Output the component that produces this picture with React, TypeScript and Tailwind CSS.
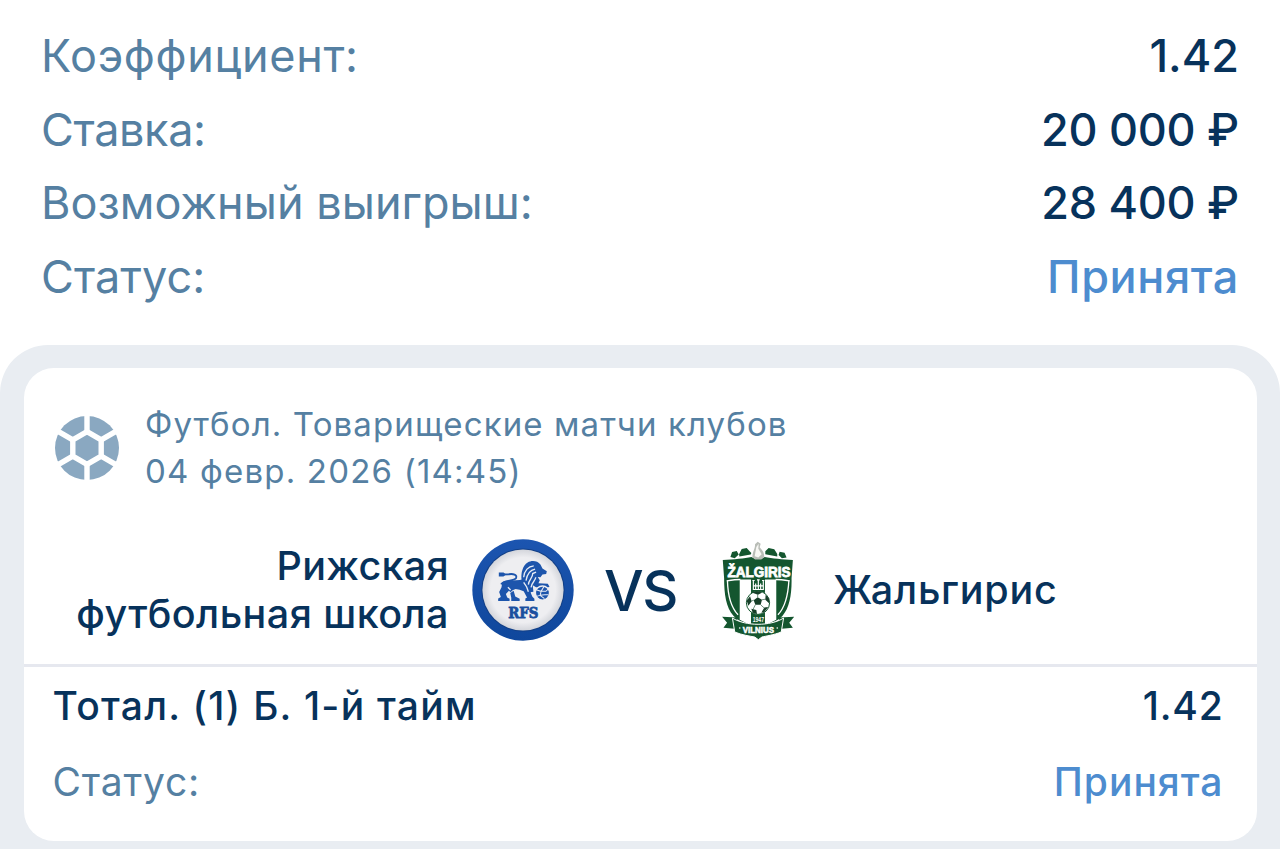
import type { ReactNode } from 'react'

const summary = [
  { label: 'Коэффициент:', value: '1.42', labelClass: 'tracking-[0.65px]', valueClass: 'text-[#07325b]' },
  { label: 'Ставка:', value: '20 000 ₽', labelClass: 'tracking-[-0.35px]', valueClass: 'text-[#07325b] tracking-[-0.25px]' },
  { label: 'Возможный выигрыш:', value: '28 400 ₽', labelClass: 'tracking-[0.05px]', valueClass: 'text-[#07325b] tracking-[-0.25px]' },
  { label: 'Статус:', value: 'Принята', labelClass: 'tracking-[0.05px]', valueClass: 'text-[#4d8ccf] tracking-[0.6px]' },
]

function BallIcon() {
  return (
    <svg viewBox="0 0 64 64" className="size-16 shrink-0" fill="#8aa8c1">
      <circle cx="32" cy="32" r="32" />
      <g fill="none" stroke="#fff" strokeWidth="5.4">
        <path d="M32 15.6 46.2 23.8V40.2L32 48.4 17.8 40.2V23.8Z" />
        <path d="M32 15.6V-2M32 48.4V66M46.2 23.8 63 14.1M46.2 40.2 63 49.9M17.8 23.8 1 14.1M17.8 40.2 1 49.9" />
      </g>
    </svg>
  )
}

function RfsLogo() {
  return (
    <svg viewBox="36 28 304 304" className="size-[102px] shrink-0">
      <defs>
        <radialGradient id="rfs-face">
          <stop offset="0.8" stopColor="#eeeef1" />
          <stop offset="1" stopColor="#d3d5db" />
        </radialGradient>
        <linearGradient id="rfs-ring" x1="0" y1="0" x2="0" y2="1">
          <stop offset="0" stopColor="#1c55b0" />
          <stop offset="1" stopColor="#0f479c" />
        </linearGradient>
      </defs>
      <circle cx="188" cy="180" r="151" fill="url(#rfs-ring)" />
      <circle cx="188" cy="180" r="124" fill="#123f86" />
      <circle cx="188" cy="180" r="121" fill="url(#rfs-face)" />
      {/* lion */}
      <g fill="#1d55ac">
        <path d="M126 157C140 149 170 154 190 147L200 160 214 172 211 188 216 200 222 206V213H195V205L200 202 190 184 178 179 166 177 157 181 151 187 146 182 137 192 141 202 148 206V213H114V205L122 201 117 186 124 172Z" />
        <path d="M150 189 160 182 165 199 178 206V213H153V203Z" />
        <path d="M184 151C181 130 187 107 202 98 213 91 231 92 240 104L246 116 259 124 257 132 246 134 240 142 232 141 238 151 234 160 262 161 267 170 258 174 227 172 217 166 219 185 209 187 199 174Z" />
      </g>
      <path d="M123 163C128 150 162 154 167 145 172 134 158 131 146 133L118 134" fill="none" stroke="#1d55ac" strokeWidth="5.5" />
      <path d="M116 128H130L137 134 130 140H116Z" fill="#1d55ac" />
      <g fill="none" stroke="#e7ecf5" strokeWidth="4">
        <path d="M190 142C192 122 204 109 220 108" />
        <path d="M197 152C200 134 208 121 224 118" />
        <path d="M204 164C205 148 217 145 217 131L227 127" />
        <path d="M212 172C214 157 225 153 226 142" />
        <path d="M190 157 199 171 204 185M143 172 151 180" />
      </g>
      <circle cx="246" cy="189" r="21" fill="#1d55ac" stroke="#eeeef1" strokeWidth="4" />
      <path d="M229 180 242 184 250 170M242 184 239 196 227 199M239 196 252 206M242 184 256 184 264 177M239 196 253 194 264 194" fill="none" stroke="#e7ecf5" strokeWidth="3" />
      <text x="189" y="263" textAnchor="middle" textLength="90" lengthAdjust="spacingAndGlyphs" fontSize="44" fontWeight="700" fontFamily="'DejaVu Serif', serif" fill="#1a4f9f" stroke="#1a4f9f" strokeWidth="2.5">RFS</text>
    </svg>
  )
}

function ZalgirisLogo() {
  return (
    <svg viewBox="45 30 216 298" className="h-[99px] w-[72px] shrink-0 overflow-visible">
      {/* fortress wall */}
      <g fill="#14562f">
        <path d="M73 78 78 63 92 60 98 71 86 82ZM99 70 107 54 122 51 130 60 136 66 134 71 100 77ZM188 51 205 55 214 69 214 77 178 70 178 61ZM218 72 221 62 236 65 242 80 228 82Z" />
      </g>
      {/* shield */}
      <path d="M50 87C84 86 116 82 136 78L148 84H166L176 78C198 82 230 86 261 87L257 142C258 190 251 231 230 255 212 276 180 282 156 291 132 282 101 276 82 255 60 231 54 190 54 142Z" fill="#14562f" />
      <path d="M139 78C141 58 148 52 147 40L155 32 164 38 161 49C167 57 174 60 175 78L166 86H147Z" fill="#b9bdb7" />
      <path d="M146 76 151 48 158 38 157 53 167 70 157 80Z" fill="#f8f8f4" />
      {/* stripes and the inner outline */}
      <path d="M101 146H135V284L101 267ZM177 146H211V267L177 284Z" fill="#fff" />
      <path d="M64 148C65 187 71 226 96 252M249 148C247 187 241 226 216 252" fill="none" stroke="#fff" strokeWidth="4" />
      <path d="M62 150C82 147 92 146 103 146M209 146C220 146 230 147 251 150" fill="none" stroke="#fff" strokeWidth="4" />
      <text x="159" y="137" textAnchor="middle" textLength="190" lengthAdjust="spacingAndGlyphs" fontSize="46" fontWeight="700" fontFamily="'Liberation Sans', sans-serif" fill="#fff" stroke="#fff" strokeWidth="2.5">ŽALGIRIS</text>
      {/* gate */}
      <path d="M142 149V176H172V149M149 176V158M164 176V158M157 176V145M142 165H172M139 149H146M168 149H175M153 147H161" fill="none" stroke="#fff" strokeWidth="3.5" />
      {/* ball */}
      <circle cx="156" cy="216" r="35" fill="#fff" stroke="#14562f" strokeWidth="3" />
      <path d="M143 208 155 199 168 207 164 222H148ZM137 185 155 181 169 185 156 192ZM122 210 132 196 137 211 127 225ZM179 192 189 203 190 218 178 207ZM136 234 151 238 153 250 140 246ZM175 230 187 229 174 245 166 246Z" fill="#173f29" />
      <path d="M155 199V191M143 208 136 211M148 222 141 236M164 222 175 232M168 207 179 205" stroke="#26563b" strokeWidth="2" />
      <path d="M137 255H177V280H137Z" fill="#14562f" />
      <text x="157" y="273" textAnchor="middle" textLength="34" lengthAdjust="spacingAndGlyphs" fontSize="19" fontWeight="700" fontFamily="'Liberation Sans', sans-serif" fill="#fff">1947</text>
      {/* ribbon */}
      <path d="M48 258 94 260V295L52 291 63 276ZM265 258 219 260V295L261 291 250 276Z" fill="#14562f" />
      <path d="M79 262C120 287 193 287 233 262L226 304C203 313 180 316 168 319L157 327 146 319C130 316 108 313 86 304Z" fill="#14562f" stroke="#fff" strokeWidth="3" />
      <text x="157" y="306" textAnchor="middle" textLength="94" lengthAdjust="spacingAndGlyphs" fontSize="25" fontWeight="700" fontFamily="'Liberation Sans', sans-serif" fill="#fff" stroke="#fff" strokeWidth="1.5">VILNIUS</text>
      <circle cx="101" cy="292" r="2.5" fill="#fff" />
      <circle cx="214" cy="292" r="2.5" fill="#fff" />
    </svg>
  )
}

function Row({ children, className }: { children: ReactNode; className: string }) {
  return <div className={`flex items-center justify-between whitespace-nowrap ${className}`}>{children}</div>
}

export default function App() {
  return (
    <div className="flex h-[849px] w-[1280px] flex-col overflow-hidden bg-white font-['Inter',sans-serif] text-[#07325b]">
      <div className="h-[345px] shrink-0 pt-[19px] pr-[41px] pl-[41px] text-[45px]">
        {summary.map(row => (
          <Row key={row.label} className="h-[73.6px]">
            <span className={`text-[#5580a2] ${row.labelClass}`}>{row.label}</span>
            <span className={`font-medium ${row.valueClass}`}>{row.value}</span>
          </Row>
        ))}
      </div>

      <div className="h-[560px] shrink-0 rounded-t-[48px] bg-[#e9edf2] px-[23.5px] pt-[23px]">
        <div className="h-[473px] overflow-hidden rounded-[30px] bg-white">
          <div className="flex h-[160px] items-start pt-[32px] pl-[31.5px]">
            <div className="pt-4"><BallIcon /></div>
            <div className="pt-px pl-[26px] text-[33px] leading-[47.3px] whitespace-nowrap text-[#5580a2]">
              <div className="tracking-[1.12px]">Футбол. Товарищеские матчи клубов</div>
              <div className="tracking-[1.2px]">04 февр. 2026 (14:45)</div>
            </div>
          </div>

          <div className="flex h-[136px] items-center pb-[12px] text-[39.5px] leading-[48.4px] font-medium whitespace-nowrap">
            <div className="w-[425.5px] text-right tracking-[0.45px]">
              <div className="tracking-[0.3px]">Рижская</div>
              <div>футбольная школа</div>
            </div>
            <div className="ml-[23px]"><RfsLogo /></div>
            <div className="w-[133px] pt-0.5 text-center text-[56px] tracking-[-1.5px]">VS</div>
            <div className="ml-[14px]"><ZalgirisLogo /></div>
            <div className="ml-[40px] tracking-[0.75px]">Жальгирис</div>
          </div>

          <div className="h-[3px] bg-[#e6e8ef]" />
          <Row className="h-[78px] pr-[33px] pl-[29px] text-[39px] font-medium">
            <span className="tracking-[1.25px]">Тотал. (1) Б. 1-й тайм</span>
            <span className="tracking-[0.8px]">1.42</span>
          </Row>
          <Row className="h-[75px] pr-[33px] pl-[29px] text-[39px]">
            <span className="tracking-[0.8px] text-[#5580a2]">Статус:</span>
            <span className="font-medium tracking-[1px] text-[#4d8ccf]">Принята</span>
          </Row>
        </div>
      </div>
    </div>
  )
}
